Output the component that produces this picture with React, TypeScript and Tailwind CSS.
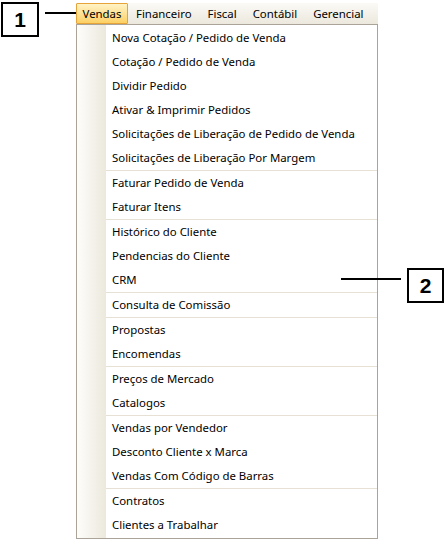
import React from "react";

const groups: string[][] = [
  [
    "Nova Cotação / Pedido de Venda",
    "Cotação / Pedido de Venda",
    "Dividir Pedido",
    "Ativar & Imprimir Pedidos",
    "Solicitações de Liberação de Pedido de Venda",
    "Solicitações de Liberação Por Margem",
  ],
  ["Faturar Pedido de Venda", "Faturar Itens"],
  ["Histórico do Cliente", "Pendencias do Cliente", "CRM"],
  ["Consulta de Comissão"],
  ["Propostas", "Encomendas"],
  ["Preços de Mercado", "Catalogos"],
  ["Vendas por Vendedor", "Desconto Cliente x Marca", "Vendas Com Código de Barras"],
  ["Contratos", "Clientes a Trabalhar"],
];

const menus = ["Financeiro", "Fiscal", "Contábil", "Gerencial"];

export default function App() {
  return (
    <div
      className="relative w-[445px] h-[539px] bg-white overflow-hidden text-black"
      style={{ fontFamily: '"Noto Sans", "Liberation Sans", sans-serif' }}
    >
      <div className="flex flex-row">
        {/* callout 1 */}
        <div className="w-[76px] flex flex-row items-start pt-[2px] pl-[1px]">
          <div className="w-[38px] h-[35px] border-2 border-black flex items-center justify-center text-[21px] font-bold leading-none" style={{ fontFamily: '"Liberation Sans", Arial, sans-serif' }}>
            1
          </div>
          <div className="w-[31px] h-[2px] bg-black ml-[6px] mt-[10px]" />
        </div>

        {/* menu */}
        <div className="w-[302px] flex flex-col pt-[3px]">
          <div className="h-[21px] flex flex-row items-stretch bg-gradient-to-b from-[#fbfaf6] to-[#ece8dd] text-[11.4px]">
            <div className="w-[52px] border border-[#e6a33a] bg-gradient-to-b from-[#fff3c4] to-[#fcd062] flex items-center justify-center rounded-[1px]">
              Vendas
            </div>
            {menus.map((m) => (
              <div key={m} className="px-[8px] flex items-center">
                {m}
              </div>
            ))}
          </div>
          <div className="border border-[#aaa397] bg-white flex flex-row">
            <div className="w-[29px] bg-gradient-to-r from-[#fdfdfb] to-[#ece8dc] shrink-0" />
            <div className="flex-1 flex flex-col py-[1px]">
              {groups.map((g, gi) => (
                <div key={gi} className={gi > 0 ? "border-t border-[#e7e1d5]" : ""}>
                  {g.map((it) => (
                    <div key={it} className="h-[24px] flex items-center pl-[6px] text-[11.4px] whitespace-nowrap">
                      {it}
                    </div>
                  ))}
                </div>
              ))}
            </div>
          </div>
        </div>
      </div>

      {/* callout 2 */}
      <div className="absolute left-[341px] top-[278px] w-[60px] h-[2px] bg-black" />
      <div
        className="absolute left-[407px] top-[268px] w-[37px] h-[35px] border-2 border-black flex items-center justify-center text-[21px] font-bold leading-none bg-white"
        style={{ fontFamily: '"Liberation Sans", Arial, sans-serif' }}
      >
        2
      </div>
    </div>
  );
}
